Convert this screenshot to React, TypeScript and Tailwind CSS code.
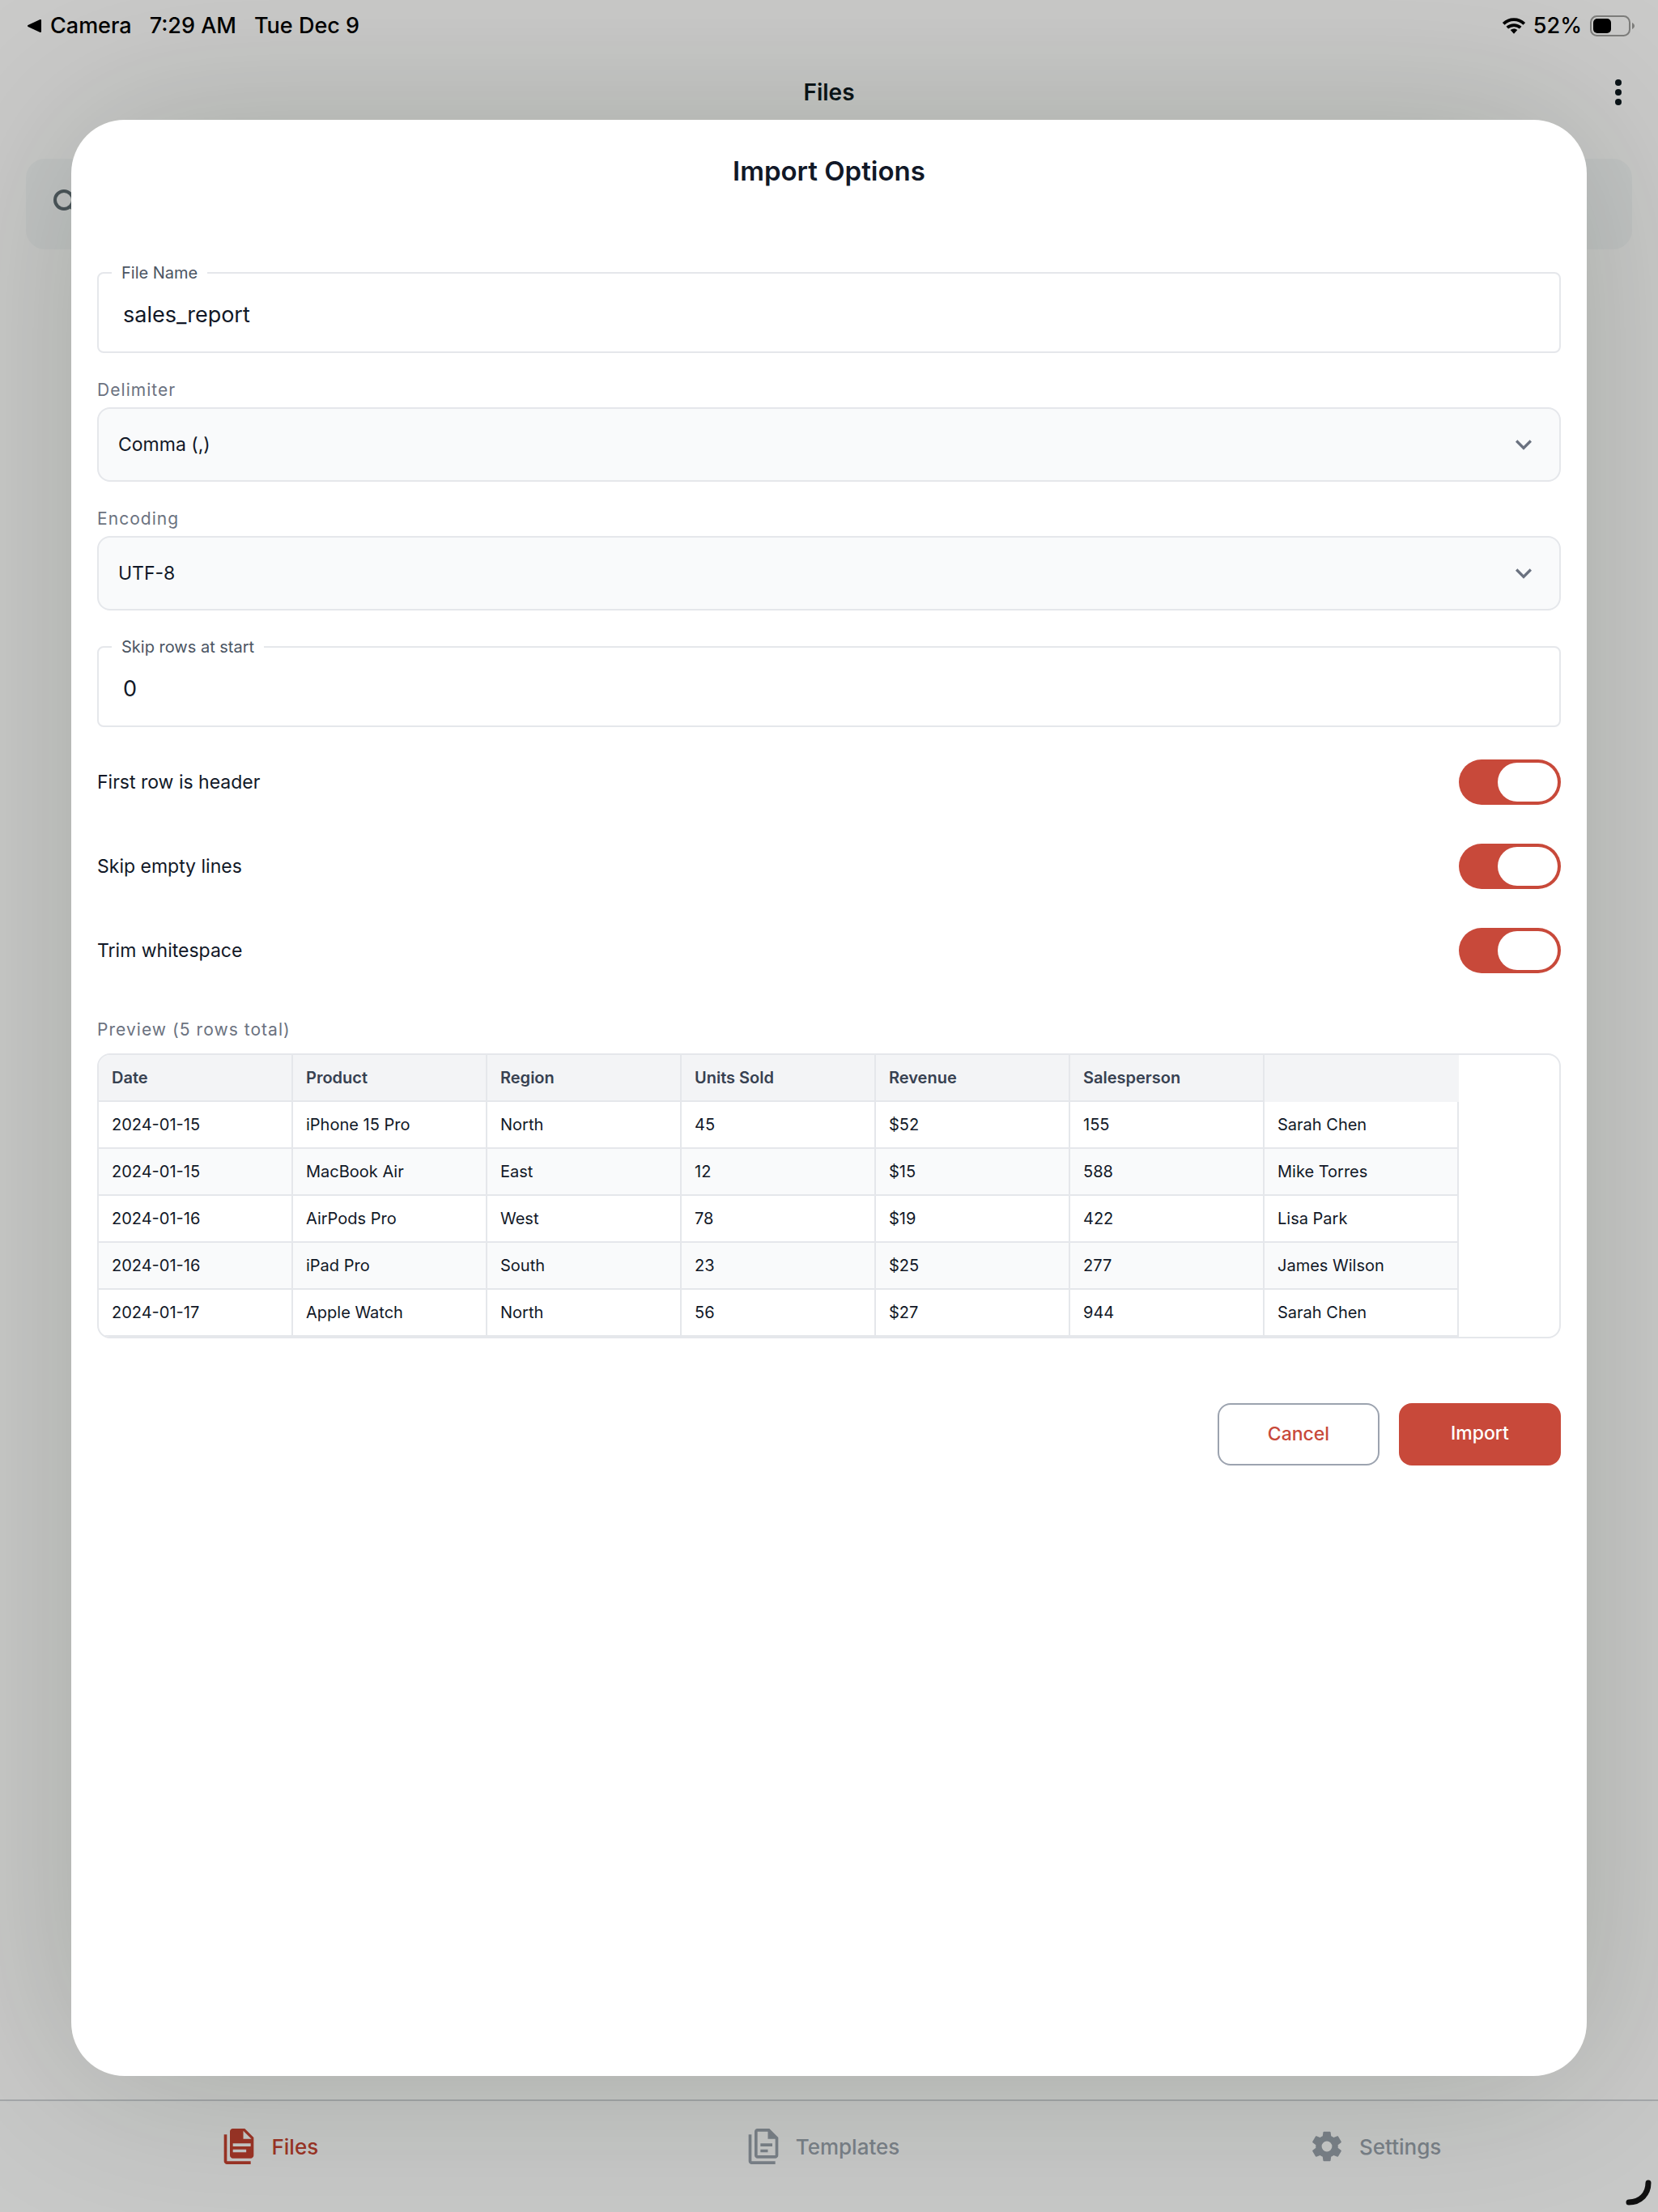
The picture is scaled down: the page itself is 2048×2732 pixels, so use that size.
import React, { useState } from "react";

const columns = ["Date", "Product", "Region", "Units Sold", "Revenue", "Salesperson"];

const rows = [
  ["2024-01-15", "iPhone 15 Pro", "North", "45", "$52", "155", "Sarah Chen"],
  ["2024-01-15", "MacBook Air", "East", "12", "$15", "588", "Mike Torres"],
  ["2024-01-16", "AirPods Pro", "West", "78", "$19", "422", "Lisa Park"],
  ["2024-01-16", "iPad Pro", "South", "23", "$25", "277", "James Wilson"],
  ["2024-01-17", "Apple Watch", "North", "56", "$27", "944", "Sarah Chen"],
];

function WifiIcon() {
  return (
    <svg viewBox="0 0 28 20" className="h-5 w-7 overflow-visible" fill="none" stroke="#000" strokeWidth="3.8" aria-hidden="true">
      <path d="M1.200 7.400C8.400.4 19.600.4 26.800 7.400" />
      <path d="M5.800 12.200c4.600-4.200 11.800-4.200 16.400 0" />
      <path d="M14 13.400c1.700 0 3.200.6 4.300 1.700L14 19.800l-4.300-4.700a6.200 6.200 0 0 1 4.300-1.700Z" fill="#000" stroke="none" />
    </svg>
  );
}

function BatteryIcon() {
  return (
    <svg viewBox="0 0 56 26" className="h-[26px] w-14" fill="none" aria-hidden="true">
      <rect x="1" y="1" width="48" height="24" rx="7.500" stroke="#7d7d7b" strokeWidth="2" />
      <rect x="4" y="4" width="22" height="18" rx="5" fill="#000" />
      <path d="M52 9c1.800.8 3 2.300 3 4s-1.200 3.200-3 4V9Z" fill="#7d7d7b" />
    </svg>
  );
}

function DocumentsIcon({ filled }: { filled: boolean }) {
  return (
    <svg viewBox="0 0 24 24" className="size-11" fill="currentColor" aria-hidden="true">
      {filled ? (
        <path d="M16 0H8C6.900 0 6 .9 6 2v16c0 1.100.9 2 2 2h12c1.100 0 2-.9 2-2V6l-6-6m-1 7V1.500L20.500 7H15M4 4v18h16v2H4c-1.100 0-2-.9-2-2V4h2m4 6v2h12v-2H8m0 4v2h9v-2H8Z" fillRule="evenodd" />
      ) : (
        <path d="M16 0H8C6.900 0 6 .9 6 2v16c0 1.100.9 2 2 2h12c1.100 0 2-.9 2-2V6l-6-6m4 18H8V2h7v5h5v11M4 4v18h16v2H4c-1.100 0-2-.9-2-2V4h2m6 6v2h8v-2h-8m0 4v2h5v-2h-5Z" fillRule="evenodd" />
      )}
    </svg>
  );
}

function CogIcon() {
  return (
    <svg viewBox="0 0 24 24" className="size-11" fill="currentColor" aria-hidden="true">
      <path d="M12 15.500A3.500 3.500 0 0 1 8.500 12 3.500 3.500 0 0 1 12 8.500a3.500 3.500 0 0 1 3.500 3.500 3.500 3.500 0 0 1-3.500 3.500m7.430-2.530c.04-.32.07-.64.07-.97s-.03-.66-.07-1l2.110-1.630c.19-.15.24-.42.12-.64l-2-3.460c-.12-.22-.39-.31-.61-.22l-2.490 1c-.52-.39-1.060-.73-1.690-.98l-.37-2.650A.506.506 0 0 0 14 2h-4c-.25 0-.46.18-.5.42l-.37 2.650c-.63.25-1.170.59-1.690.98l-2.490-1c-.22-.09-.49 0-.61.220l-2 3.460c-.13.220-.07.490.12.640L4.570 11c-.04.340-.07.670-.07 1s.03.650.07.970l-2.110 1.660c-.19.150-.25.420-.12.640l2 3.460c.12.220.39.300.61.220l2.490-1.010c.52.400 1.060.740 1.690.990l.37 2.650c.04.240.25.420.5.420h4c.25 0 .46-.18.5-.42l.37-2.650c.63-.26 1.170-.59 1.690-.99l2.490 1.010c.22.080.49 0 .61-.22l2-3.460c.12-.22.07-.49-.12-.64l-2.110-1.660Z" />
    </svg>
  );
}

function TextField({ id, label, value }: { id: string; label: string; value: string }) {
  const [text, setText] = useState(value);
  return (
    <div className="relative">
      <label htmlFor={id} className="absolute -top-[11px] left-[18px] bg-white px-3 text-[20px] leading-6 text-[#4b5563]">
        {label}
      </label>
      <input
        id={id}
        value={text}
        onChange={(e) => setText(e.target.value)}
        className="block h-[100px] w-full rounded-lg border-2 border-[#e5e7eb] bg-white px-[30px] pt-1 text-[27px] text-[#111827]"
      />
    </div>
  );
}

function SelectField({ id, label, options }: { id: string; label: string; options: string[] }) {
  return (
    <div className="flex flex-col gap-2">
      <label htmlFor={id} className="text-[21px] leading-[27px] tracking-wider text-[#6b7280]">
        {label}
      </label>
      <div className="relative">
        <select
          id={id}
          className="block h-[92px] w-full appearance-none rounded-2xl border-2 border-[#e5e7eb] bg-[#f9fafb] px-6 text-[23px] text-[#111827]"
        >
          {options.map((o) => (
            <option key={o}>{o}</option>
          ))}
        </select>
        <svg
          viewBox="0 0 24 24"
          className="pointer-events-none absolute top-[26px] right-[26px] size-10"
          fill="#6b7280"
          aria-hidden="true"
        >
          <path d="M7.410 8.580 12 13.170l4.590-4.590L18 10l-6 6-6-6 1.410-1.420Z" />
        </svg>
      </div>
    </div>
  );
}

function Toggle({ id, label }: { id: string; label: string }) {
  return (
    <div className="flex h-14 items-center justify-between">
      <label htmlFor={id} className="text-[23px] text-[#111827]">
        {label}
      </label>
      <span className="relative block h-14 w-[126px]">
        <input
          id={id}
          type="checkbox"
          role="switch"
          defaultChecked
          className="peer block h-14 w-[126px] appearance-none rounded-full bg-[#d1d5db] checked:bg-[#c8493a]"
        />
        <span className="pointer-events-none absolute top-1 left-1 h-12 w-[74px] rounded-full bg-white peer-checked:left-12" />
      </span>
    </div>
  );
}

export default function App() {
  return (
    <div className="relative flex min-h-screen flex-col overflow-hidden bg-[#cacac9] font-['Inter','Liberation_Sans',sans-serif] text-[#111827]">
      <div className="flex h-16 items-center justify-between pr-7 pl-8 text-[27px] font-medium text-black">
        <div className="flex items-center gap-[22px]">
          <span className="flex items-center gap-2.5">
            <svg viewBox="0 0 20 20" className="size-5" aria-hidden="true">
              <path d="M3 10 18 3v14Z" stroke="#000" strokeWidth="2" strokeLinejoin="round" />
            </svg>
            Camera
          </span>
          <span>7:29 AM</span>
          <span>Tue Dec 9</span>
        </div>
        <div className="flex items-center gap-2.5">
          <WifiIcon />
          <span>52%</span>
          <BatteryIcon />
        </div>
      </div>

      <header className="flex h-[100px] items-center px-[29px]">
        <div className="flex-1" />
        <h1 className="text-[28px] font-semibold text-[#0b1418]">Files</h1>
        <div className="flex flex-1 justify-end">
          <button type="button" aria-label="More options" className="flex w-10 justify-center">
            <svg viewBox="0 0 8 32" className="h-8 w-2 overflow-visible" fill="#0b1418" aria-hidden="true">
              <circle cx="4" cy="4" r="4" />
              <circle cx="4" cy="16" r="4" />
              <circle cx="4" cy="28" r="4" />
            </svg>
          </button>
        </div>
      </header>

      <main className="flex-1 px-8 pt-8">
        <div className="flex h-28 items-center rounded-3xl bg-[#c3c5c5] pl-7">
          <svg viewBox="0 0 24 24" className="size-12 text-[#4c565b]" fill="none" stroke="currentColor" strokeWidth="2" aria-hidden="true">
            <circle cx="9.500" cy="9.500" r="5.500" />
            <path d="m14 14 6 6" />
          </svg>
        </div>
      </main>

      <nav className="grid h-[139px] grid-cols-3 border-t-2 border-[#a5a8ab] bg-[#c8c9c8] text-[26px] font-medium text-[#7a8188]">
        <a href="#files" className="flex h-28 items-center justify-center gap-[18px] pr-4 text-[#9c3426]">
          <DocumentsIcon filled />
          Files
        </a>
        <a href="#templates" className="flex h-28 items-center justify-center gap-[18px] pr-4">
          <DocumentsIcon filled={false} />
          Templates
        </a>
        <a href="#settings" className="flex h-28 items-center justify-center gap-[18px] pr-4">
          <CogIcon />
          Settings
        </a>
      </nav>

      <section
        role="dialog"
        aria-labelledby="import-title"
        className="absolute inset-x-[88px] top-[148px] bottom-[168px] rounded-[66px] bg-white px-8 shadow-[0_0_220px_rgba(8,24,0,0.19)]"
      >
        <h2 id="import-title" className="pt-[39px] text-center text-[33px] leading-[48px] font-semibold">
          Import Options
        </h2>

        <form onSubmit={(e) => e.preventDefault()} className="pt-[101px]">
          <div className="flex flex-col gap-8">
            <TextField id="file-name" label="File Name" value="sales_report" />
            <SelectField id="delimiter" label="Delimiter" options={["Comma (,)", "Semicolon (;)", "Tab"]} />
            <SelectField id="encoding" label="Encoding" options={["UTF-8", "UTF-16", "ISO-8859-1"]} />
          </div>
          <div className="pt-11">
            <TextField id="skip-rows" label="Skip rows at start" value="0" />
          </div>
          <div className="flex flex-col gap-12 pt-10">
            <Toggle id="header-row" label="First row is header" />
            <Toggle id="skip-empty" label="Skip empty lines" />
            <Toggle id="trim" label="Trim whitespace" />
          </div>

          <h3 id="preview-title" className="pt-14 text-[21px] leading-[27px] tracking-wider text-[#6b7280]">
            Preview (5 rows total)
          </h3>
          <div className="mt-4 overflow-hidden rounded-2xl border-2 border-[#e5e7eb]">
            <table aria-labelledby="preview-title" className="w-[1680px] table-fixed border-separate border-spacing-0 text-left text-[20px]">
              <thead>
                <tr className="h-[58px] bg-[#f3f4f6] text-[#374151]">
                  {columns.map((c) => (
                    <th key={c} scope="col" className="border-r-2 border-b-2 border-[#e5e7eb] px-4 font-semibold">
                      {c}
                    </th>
                  ))}
                  <td />
                </tr>
              </thead>
              <tbody>
                {rows.map((r, i) => (
                  <tr key={i} className="h-[58px] even:bg-[#f9fafb]">
                    {r.map((c, j) => (
                      <td key={j} className="border-r-2 border-b-2 border-[#e5e7eb] px-4">
                        {c}
                      </td>
                    ))}
                  </tr>
                ))}
              </tbody>
            </table>
          </div>

          <div className="flex justify-end gap-6 pt-20 text-[23px] font-medium">
            <button type="button" className="h-[77px] w-[200px] rounded-2xl border-2 border-[#9ca3af] text-[#c8493a]">
              Cancel
            </button>
            <button type="submit" className="h-[77px] w-[200px] rounded-2xl bg-[#c8493a] pb-0.5 text-white">
              Import
            </button>
          </div>
        </form>
      </section>

      <svg viewBox="0 0 32 32" className="absolute right-2 bottom-2 size-8" fill="none" stroke="#0f0f0f" strokeWidth="7" strokeLinecap="round" aria-hidden="true">
        <path d="M28 4c0 14-10 24-24 24" />
      </svg>
    </div>
  );
}
